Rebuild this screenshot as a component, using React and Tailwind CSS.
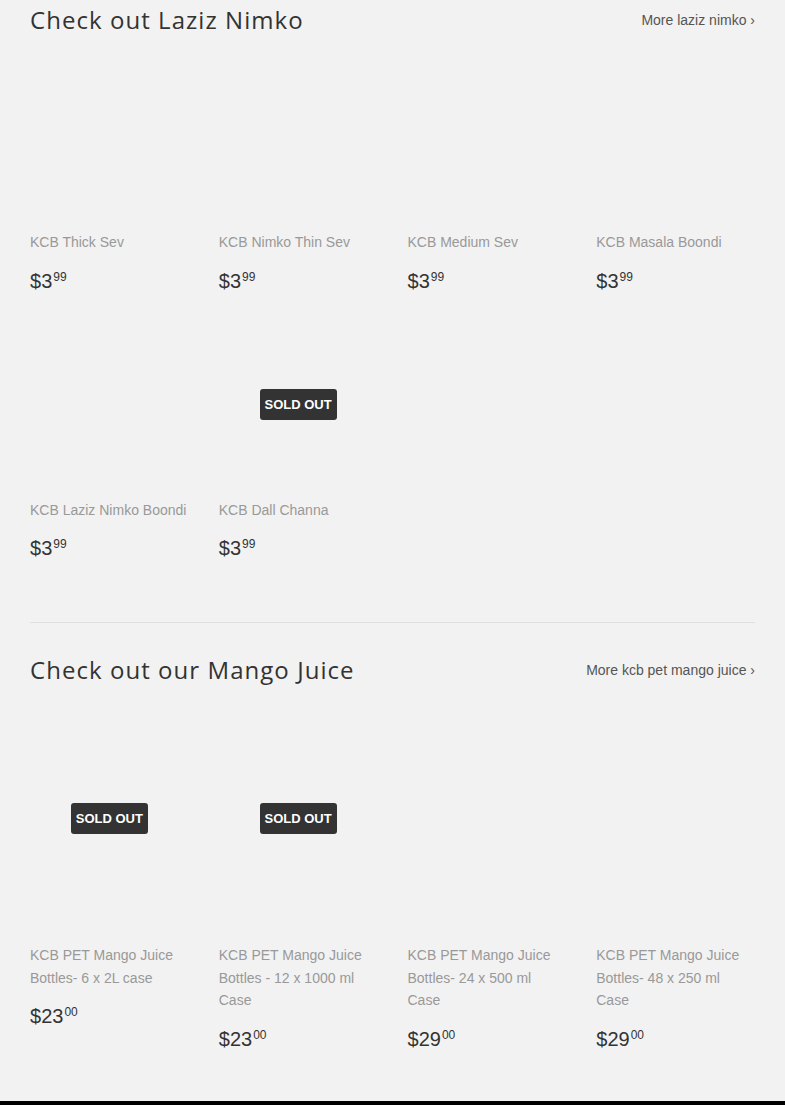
import React from 'react';

const nimko = [
  { title: 'KCB Thick Sev', dollars: '3', cents: '99' },
  { title: 'KCB Nimko Thin Sev', dollars: '3', cents: '99' },
  { title: 'KCB Medium Sev', dollars: '3', cents: '99' },
  { title: 'KCB Masala Boondi', dollars: '3', cents: '99' },
  { title: 'KCB Laziz Nimko Boondi', dollars: '3', cents: '99' },
  { title: 'KCB Dall Channa', dollars: '3', cents: '99', soldOut: true },
];

const juice = [
  { title: 'KCB PET Mango Juice Bottles- 6 x 2L case', dollars: '23', cents: '00', soldOut: true },
  { title: 'KCB PET Mango Juice Bottles - 12 x 1000 ml Case', dollars: '23', cents: '00', soldOut: true },
  { title: 'KCB PET Mango Juice Bottles- 24 x 500 ml Case', dollars: '29', cents: '00' },
  { title: 'KCB PET Mango Juice Bottles- 48 x 250 ml Case', dollars: '29', cents: '00' },
];

function ProductCard({ product, imageHeight }) {
  return (
    <a href="#" className="block">
      {/* image area - no pictures available, just the reserved box */}
      <div className={`flex items-center justify-center ${imageHeight} mb-[10px]`}>
        {product.soldOut && (
          <span className="bg-[#333333] text-white text-[13px] font-bold leading-[17px] px-[5px] py-[7px] rounded-[3px]">
            SOLD OUT
          </span>
        )}
      </div>
      <p className="text-[14px] leading-[22.5px] text-[#999999]">{product.title}</p>
      <p className="mt-[15px] text-[#333333] leading-[24px] flex items-start">
        <span className="text-[20px] leading-[24px]">${product.dollars}</span>
        <span className="text-[12px] leading-[16px] ml-[1px]">{product.cents}</span>
      </p>
    </a>
  );
}

function Section({ heading, linkText, products, imageHeight }) {
  return (
    <section>
      <div className="flex justify-between items-center h-[40px]">
        <h2 className="font-['Open_Sans',sans-serif] text-[24px] tracking-[1.05px] text-[#333333] font-normal">
          {heading}
        </h2>
        <a href="#" className="text-[14px] text-[#555555] hover:text-[#333333]">
          {linkText} ›
        </a>
      </div>
      <div className="grid grid-cols-4 gap-x-[30px] gap-y-[27px] mt-[12px]">
        {products.map((p) => (
          <ProductCard key={p.title} product={p} imageHeight={imageHeight} />
        ))}
      </div>
    </section>
  );
}

export default function App() {
  return (
    <div className="bg-[#f2f2f2] min-h-[1105px] font-['Liberation_Sans',Arial,sans-serif] flex flex-col">
      <div className="px-[30px]">
        <Section
          heading="Check out Laziz Nimko"
          linkText="More laziz nimko"
          products={nimko}
          imageHeight="h-[169px]"
        />
        <hr className="border-t border-[#e0e0e0] mt-[62px] mb-[27px]" />
        <Section
          heading="Check out our Mango Juice"
          linkText="More kcb pet mango juice"
          products={juice}
          imageHeight="h-[232px]"
        />
      </div>
      <div className="flex-1" />
      <div className="h-[4px] bg-black" />
    </div>
  );
}
